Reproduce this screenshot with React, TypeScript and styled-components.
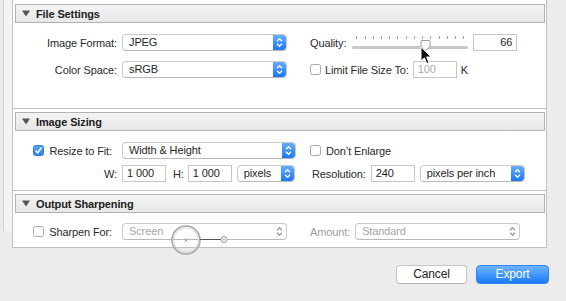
import React from 'react'
import styled, { createGlobalStyle } from 'styled-components'

const GlobalStyle = createGlobalStyle`
  html, body {
    margin: 0;
    padding: 0;
    background: #ececec;
  }
  body {
    font-family: "Liberation Sans", Arial, sans-serif;
    font-size: 11px;
    letter-spacing: -0.12px;
    color: #262626;
  }
`

const Chevrons: React.FC<{ color: string }> = ({ color }) => (
  <svg width="7" height="11" viewBox="0 0 7 11">
    <path d="M1 4.2 L3.5 1.7 L6 4.2" fill="none" stroke={color} strokeWidth="1.3" />
    <path d="M1 6.8 L3.5 9.3 L6 6.8" fill="none" stroke={color} strokeWidth="1.3" />
  </svg>
)

const Select: React.FC<{ width: number; value: string; disabled?: boolean }> = ({ width, value, disabled }) => (
  <SelectBox $w={width}>
    <SelectText $disabled={disabled}>{value}</SelectText>
    <Stepper $blue={!disabled}>
      <Chevrons color={disabled ? '#9c9c9c' : '#ffffff'} />
    </Stepper>
  </SelectBox>
)

const Checkbox: React.FC<{ checked?: boolean }> = ({ checked }) => (
  <Check $checked={checked}>
    {checked && (
      <svg width="9" height="9" viewBox="0 0 9 9">
        <path d="M1.6 4.6 L3.6 6.8 L7.4 1.8" fill="none" stroke="#fff" strokeWidth="1.6" />
      </svg>
    )}
  </Check>
)

const Slider: React.FC<{ value: number }> = ({ value }) => (
  <SliderBox>
    <Ticks>
      {Array.from({ length: 14 }).map((_, i) => (
        <Tick key={i} />
      ))}
    </Ticks>
    <Track />
    <Thumb style={{ left: `${(value / 100) * 116 - 9}px` }}>
      <svg width="11" height="13" viewBox="0 0 11 13">
        <path d="M2 1.5 H9 Q10 1.5 10 2.5 V7.5 L5.5 11.8 L1 7.5 V2.5 Q1 1.5 2 1.5 Z" fill="#fbfbfb" stroke="#9d9d9d" strokeWidth="1" />
      </svg>
    </Thumb>
  </SliderBox>
)

const SectionHead: React.FC<{ title: string }> = ({ title }) => (
  <Header>
    <svg width="8" height="7" viewBox="0 0 8 7">
      <path d="M0 0.5 H8 L4 6.5 Z" fill="#555" />
    </svg>
    <HeaderTitle>{title}</HeaderTitle>
  </Header>
)

const App: React.FC = () => {
  return (
    <Root>
      <GlobalStyle />
      <Workspace>
        <Rail />
        <Panel>
          <Section $first>
            <SectionHead title="File Settings" />
            <Body $pad="11px 0 30px" $gap={10}>
              <Row>
                <LeftCol>
                  <Label $w={102} $gap={5}>Image Format:</Label>
                  <Select width={165} value="JPEG" />
                </LeftCol>
                <RightCol>
                  <Text>Quality:</Text>
                  <Spacer $w={6} />
                  <Slider value={66} />
                  <Spacer $w={5} />
                  <Field $w={44} $align="right">66</Field>
                </RightCol>
              </Row>
              <Row>
                <LeftCol>
                  <Label $w={102} $gap={5}>Color Space:</Label>
                  <Select width={165} value="sRGB" />
                </LeftCol>
                <RightCol>
                  <Checkbox />
                  <Spacer $w={4} />
                  <Text>Limit File Size To:</Text>
                  <Spacer $w={4} />
                  <Field $w={44} $muted>100</Field>
                  <Spacer $w={4} />
                  <Text>K</Text>
                </RightCol>
              </Row>
            </Body>
          </Section>

          <Section>
            <SectionHead title="Image Sizing" />
            <Body $pad="11px 0 8px" $gap={6}>
              <Row>
                <LeftCol>
                  <CheckLabel $w={97} $gap={10}>
                    <Checkbox checked />
                    <Text>Resize to Fit:</Text>
                  </CheckLabel>
                  <Select width={174} value="Width & Height" />
                </LeftCol>
                <RightCol>
                  <Checkbox />
                  <Spacer $w={5} />
                  <Text>Don’t Enlarge</Text>
                </RightCol>
              </Row>
              <Row>
                <LeftCol>
                  <Label $w={102} $gap={5}>W:</Label>
                  <Field $w={44}>1 000</Field>
                  <Spacer $w={7} />
                  <Text>H:</Text>
                  <Spacer $w={4} />
                  <Field $w={44}>1 000</Field>
                  <Spacer $w={5} />
                  <Select width={58} value="pixels" />
                </LeftCol>
                <RightCol>
                  <Spacer $w={2} />
                  <Text>Resolution:</Text>
                  <Spacer $w={5} />
                  <Field $w={44}>240</Field>
                  <Spacer $w={5} />
                  <Select width={105} value="pixels per inch" />
                </RightCol>
              </Row>
            </Body>
          </Section>

          <Section>
            <SectionHead title="Output Sharpening" />
            <Body $pad="10px 0 7px" $gap={0}>
              <Row>
                <LeftCol>
                  <CheckLabel $w={97} $gap={10}>
                    <Checkbox />
                    <Text>Sharpen For:</Text>
                  </CheckLabel>
                  <Select width={165} value="Screen" disabled />
                </LeftCol>
                <RightCol>
                  <Text $muted>Amount:</Text>
                  <Spacer $w={5} />
                  <Select width={165} value="Standard" disabled />
                </RightCol>
              </Row>
            </Body>
          </Section>
        </Panel>
      </Workspace>

      <Footer>
        <Button>Cancel</Button>
        <PrimaryButton>Export</PrimaryButton>
      </Footer>

      <ClickMark width="64" height="34" viewBox="0 0 64 34">
        <circle cx="16" cy="16" r="14" fill="none" stroke="#a8a8a8" strokeWidth="1.6" />
        <circle cx="16" cy="16" r="12.3" fill="none" stroke="#d6d6d6" strokeWidth="1" />
        <path d="M14.5 14.5 L17.5 17.5 M17.5 14.5 L14.5 17.5" stroke="#a0a0a0" strokeWidth="1" />
        <line x1="30" y1="15.5" x2="51" y2="15.5" stroke="#555" strokeWidth="1" />
        <circle cx="54" cy="15.5" r="3" fill="#fff" stroke="#9a9a9a" strokeWidth="1" />
        <circle cx="54" cy="15.5" r="1.2" fill="#b0b0b0" />
      </ClickMark>

      <Cursor width="13" height="19" viewBox="0 0 13 19">
        <path d="M1 1 L1 15 L4.3 11.9 L6.8 17.6 L9 16.6 L6.6 11 L11 11 Z" fill="#111" stroke="#fff" strokeWidth="1" strokeLinejoin="round" />
      </Cursor>
    </Root>
  )
}

export default App

const Root = styled.div`
  position: relative;
  width: 566px;
  height: 301px;
  overflow: hidden;
  background: #ececec;
`

const Workspace = styled.div`
  display: flex;
  align-items: flex-start;
`

const Rail = styled.div`
  margin-left: 3px;
  width: 8px;
  height: 231px;
  border-left: 1px solid #d2d2d2;
  background: #f4f4f4;
`

const Panel = styled.div`
  width: 533px;
  border-left: 1px solid #c2c2c2;
  border-right: 1px solid #c2c2c2;
  background: #fff;
`

const Section = styled.div<{ $first?: boolean }>`
  padding: ${({ $first }) => ($first ? '4px' : '3px')} 1px 0 2px;
  border-bottom: 1px solid #c0c0c0;
`

const Header = styled.div`
  box-sizing: border-box;
  height: 19px;
  display: flex;
  align-items: center;
  gap: 6px;
  padding-left: 6px;
  border: 1px solid #b2b2b2;
  background: linear-gradient(#f4f4f4, #e7e7e7);
`

const HeaderTitle = styled.span`
  font-weight: bold;
  font-size: 11px;
  color: #222;
`

const Body = styled.div<{ $pad: string; $gap: number }>`
  display: flex;
  flex-direction: column;
  gap: ${({ $gap }) => $gap}px;
  padding: ${({ $pad }) => $pad};
`

const Row = styled.div`
  display: flex;
  align-items: center;
  height: 17px;
`

const LeftCol = styled.div`
  width: 295px;
  display: flex;
  align-items: center;
`

const RightCol = styled.div`
  flex: 1;
  display: flex;
  align-items: center;
`

const Label = styled.div<{ $w: number; $gap: number }>`
  width: ${({ $w }) => $w}px;
  margin-right: ${({ $gap }) => $gap}px;
  text-align: right;
  white-space: nowrap;
  color: #2a2a2a;
`

const CheckLabel = styled.div<{ $w: number; $gap: number }>`
  width: ${({ $w }) => $w}px;
  margin-right: ${({ $gap }) => $gap}px;
  display: flex;
  align-items: center;
  justify-content: flex-end;
  gap: 5px;
  white-space: nowrap;
`

const Text = styled.span<{ $muted?: boolean }>`
  white-space: nowrap;
  color: ${({ $muted }) => ($muted ? '#9c9c9c' : '#2a2a2a')};
`

const Spacer = styled.span<{ $w: number }>`
  display: inline-block;
  width: ${({ $w }) => $w}px;
  flex: none;
`

const SelectBox = styled.div<{ $w: number }>`
  box-sizing: border-box;
  width: ${({ $w }) => $w}px;
  height: 17px;
  flex: none;
  display: flex;
  border: 1px solid #cacaca;
  border-bottom-color: #b9b9b9;
  border-radius: 4px;
  background: #fff;
  overflow: hidden;
`

const SelectText = styled.span<{ $disabled?: boolean }>`
  flex: 1;
  padding-left: 6px;
  line-height: 15px;
  white-space: nowrap;
  color: ${({ $disabled }) => ($disabled ? '#a6a6a6' : '#262626')};
`

const Stepper = styled.span<{ $blue: boolean }>`
  width: 13px;
  display: flex;
  align-items: center;
  justify-content: center;
  background: ${({ $blue }) => ($blue ? 'linear-gradient(#66adfc, #1c77f5)' : 'transparent')};
  border-radius: 0 3px 3px 0;
`

const Field = styled.div<{ $w: number; $align?: string; $muted?: boolean }>`
  box-sizing: border-box;
  width: ${({ $w }) => $w}px;
  height: 17px;
  flex: none;
  padding: 0 4px;
  border: 1px solid #c6c6c6;
  background: #fff;
  line-height: 15px;
  text-align: ${({ $align }) => $align || 'left'};
  color: ${({ $muted }) => ($muted ? '#a8a8a8' : '#262626')};
`

const Check = styled.span<{ $checked?: boolean }>`
  box-sizing: border-box;
  width: 11px;
  height: 11px;
  flex: none;
  display: flex;
  align-items: center;
  justify-content: center;
  border-radius: 2.5px;
  border: 1px solid ${({ $checked }) => ($checked ? '#2f78de' : '#a8a8a8')};
  background: ${({ $checked }) => ($checked ? 'linear-gradient(#57a2fb, #2a82f4)' : '#fff')};
`

const SliderBox = styled.div`
  position: relative;
  width: 116px;
  height: 17px;
  flex: none;
`

const Ticks = styled.div`
  display: flex;
  justify-content: space-between;
  padding: 2px 4px 0;
`

const Tick = styled.span`
  width: 1px;
  height: 3px;
  background: #9e9e9e;
`

const Track = styled.div`
  margin-top: 7px;
  height: 3px;
  border-radius: 2px;
  background: #c9c9c9;
`

const Thumb = styled.span`
  position: absolute;
  top: 5px;
  display: flex;
`

const Footer = styled.div`
  display: flex;
  justify-content: flex-end;
  align-items: center;
  gap: 9px;
  padding: 17px 17px 0 0;
`

const Button = styled.div`
  box-sizing: border-box;
  width: 71px;
  height: 19px;
  border: 1px solid #c4c4c4;
  border-bottom-color: #b2b2b2;
  border-radius: 4px;
  background: #fff;
  font-size: 12px;
  line-height: 17px;
  text-align: center;
  color: #222;
`

const PrimaryButton = styled(Button)`
  width: 73px;
  border-color: #2f86f5;
  background: linear-gradient(#6db3fc, #1a7cf7);
  color: #fff;
`

const ClickMark = styled.svg`
  position: absolute;
  left: 170px;
  top: 224px;
`

const Cursor = styled.svg`
  position: absolute;
  left: 420px;
  top: 46px;
`
